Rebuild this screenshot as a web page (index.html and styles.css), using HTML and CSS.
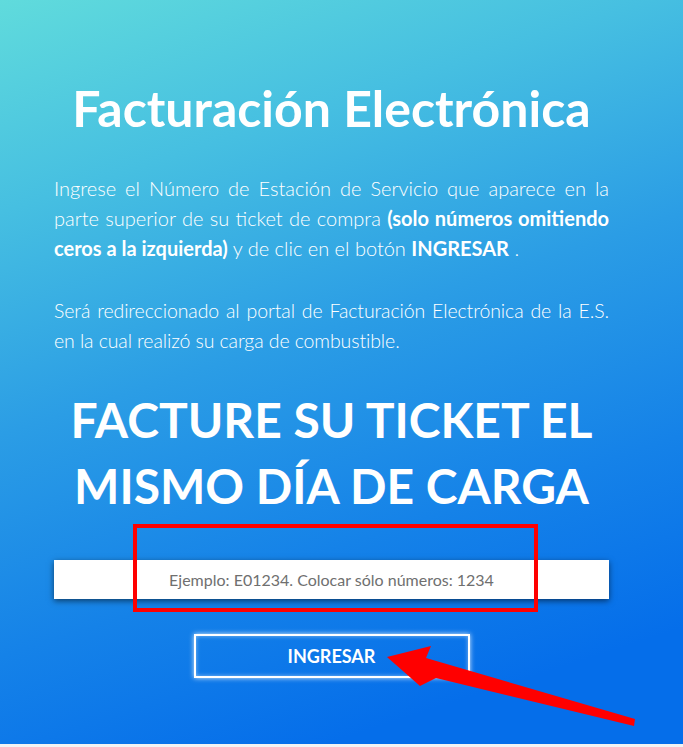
FILE: index.html
```html
<!DOCTYPE html>
<html lang="es">
<head>
<meta charset="utf-8">
<title>Facturación Electrónica</title>
<link rel="stylesheet" href="styles.css">
</head>
<body>
<section class="hero">
  <div class="content">
    <h1 class="title">Facturación Electrónica</h1>
    <p class="lead">Ingrese el Número de Estación de Servicio que aparece en la parte superior de su ticket de compra <b>(solo números omitiendo ceros a la izquierda)</b> y de clic en el botón <b>INGRESAR</b> .</p>
    <p class="lead lead-second">Será redireccionado al portal de Facturación Electrónica de la E.S. en la cual realizó su carga de combustible.</p>
    <h2 class="headline">FACTURE SU TICKET EL<br>MISMO DÍA DE CARGA</h2>
    <input class="station-input" type="text" placeholder="Ejemplo: E01234. Colocar sólo números: 1234">
    <div class="actions">
      <button class="btn" type="button">INGRESAR</button>
    </div>
  </div>
  <div class="highlight-box"></div>
  <svg class="arrow" width="683" height="747" viewBox="0 0 683 747">
    <polygon points="387,657 431,646 426,658 635,719 634,726 436,678 420,686" fill="#ff0000"/>
  </svg>
</section>
<div class="below"></div>
</body>
</html>
```

FILE: styles.css
```css
html, body {
  margin: 0;
  padding: 0;
}
body {
  background: #f3f3f3;
  font-family: Lato, "Open Sans", sans-serif;
}
.hero {
  position: relative;
  height: 744px;
  overflow: hidden;
  background: linear-gradient(162deg, #60dbdc 0%, #46bfe1 22%, #2b9de5 45%, #1582e8 68%, #056eea 88%, #056eea 100%);
}
.content {
  margin-left: 54px;
  width: 555px;
  color: #fff;
}
.title {
  margin: 79px 0 0;
  font-size: 50px;
  line-height: 58px;
  font-weight: 700;
  text-align: center;
}
.lead {
  margin: 36px 0 0;
  font-size: 20px;
  line-height: 30px;
  font-weight: 300;
  text-align: justify;
}
.lead b {
  font-weight: 700;
}
.lead-second {
  margin-top: 33px;
  font-size: 19.5px;
  letter-spacing: -0.1px;
}
.headline {
  margin: 31px 0 0;
  font-size: 48px;
  line-height: 66px;
  font-weight: 700;
  text-align: center;
}
.station-input {
  display: block;
  box-sizing: border-box;
  margin: 41px 0 0;
  width: 555px;
  height: 39px;
  border: none;
  outline: none;
  background: #fff;
  box-shadow: 0 2px 6px rgba(0, 0, 0, 0.55);
  font-family: Lato, sans-serif;
  font-size: 16px;
  text-align: center;
  color: #555;
}
.station-input::placeholder {
  color: #6f6f6f;
  opacity: 1;
}
.actions {
  display: flex;
  justify-content: center;
  margin-top: 35px;
}
.btn {
  box-sizing: border-box;
  width: 276px;
  height: 44px;
  border: 2px solid #fff;
  background: transparent;
  box-shadow: 0 0 5px rgba(255, 255, 255, 0.85), inset 0 0 4px rgba(255, 255, 255, 0.5);
  color: #fff;
  font-family: Lato, sans-serif;
  font-weight: 700;
  font-size: 18px;
  padding: 0;
}
.highlight-box {
  position: absolute;
  left: 133px;
  top: 524px;
  width: 397px;
  height: 80px;
  border: 4px solid #ff0000;
}
.arrow {
  position: absolute;
  left: 0;
  top: 0;
  pointer-events: none;
}
.below {
  height: 3px;
}
```
